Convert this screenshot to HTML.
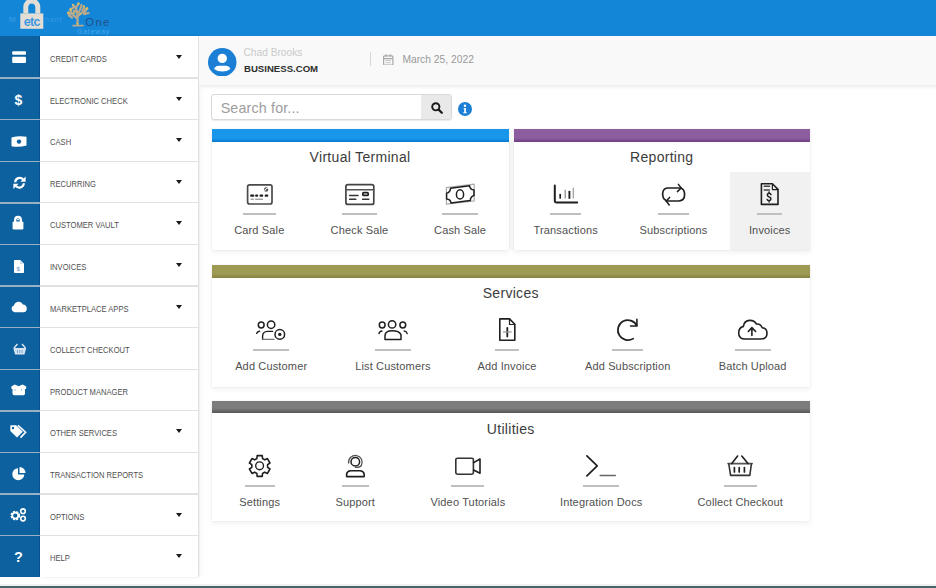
<!DOCTYPE html>
<html><head><meta charset="utf-8">
<style>
*{margin:0;padding:0;box-sizing:border-box}
html,body{width:936px;height:588px;overflow:hidden;background:#fff;font-family:"Liberation Sans",sans-serif;position:relative}
.abs{position:absolute}
.sic{position:absolute;overflow:visible}
.t{position:absolute;white-space:nowrap;line-height:1}
.lbl{position:absolute;left:49.8px;font-size:9.5px;color:#505050;white-space:nowrap;line-height:1;transform:scaleX(0.8);transform-origin:0 0}
.caret{position:absolute;left:175.8px;width:0;height:0;border-left:3.7px solid transparent;border-right:3.7px solid transparent;border-top:4.3px solid #1a1a1a}
.sep{position:absolute;left:0;width:198px;height:1.3px;background:#dfe1e4}
.sepb{position:absolute;left:0;width:40px;height:1.4px;background:#98b0c6}
.card{position:absolute;background:#fff;box-shadow:0 0 2px rgba(0,0,0,.08),0 3px 5px rgba(0,0,0,.05)}
.bar{position:absolute;left:0;top:0;width:100%;height:12.5px}
.title{position:absolute;left:0;width:100%;text-align:center;font-size:14px;letter-spacing:0.3px;color:#3c3c3c;line-height:1}
.ul{position:absolute;height:2px;background:#bfbfbf}
.il{position:absolute;font-size:11px;letter-spacing:0.15px;color:#505050;white-space:nowrap;line-height:1;text-align:center;width:140px}
svg.ic{position:absolute;overflow:visible}
svg.ic .s{fill:none;stroke:#1f1f1f;stroke-linecap:round;stroke-linejoin:round}
svg.ic .f{fill:#1f1f1f;stroke:none}
</style></head><body>

<div class="abs" style="left:0;top:0;width:936px;height:36.4px;background:#1386d7"></div>
<svg class="abs" style="left:0;top:0" width="130" height="37" viewBox="0 0 130 37">
<path d="M25.8 13.6 V7 A6 6 0 0 1 37.8 7 V13.6" stroke="#e2ded6" stroke-width="5" fill="none"/>
<rect x="20.3" y="13.4" width="23" height="15.4" fill="#e2ded6"/>
<text x="31.8" y="26.4" text-anchor="middle" font-family="Liberation Sans" font-weight="700" font-size="12.5" fill="#3f97e0" letter-spacing="-0.6">etc</text>
<text x="9" y="22" font-family="Liberation Sans" font-size="8" fill="#52a8ee" opacity="0.7">M</text>
<text x="45" y="22" font-family="Liberation Sans" font-size="7" fill="#52a8ee" opacity="0.6" letter-spacing="1">hant</text>
<g stroke="#b5a88f" stroke-width="2.3" fill="none" stroke-linecap="round">
<path d="M77.5 25 V15.5 M77.5 18.5 L72 14 M72 14 L68.5 12.5 M72 14 L70.5 9.5 M77.5 16.5 L82.5 12 M82.5 12 L87 8.5 M82.5 12 L84 6.5 M77.5 15.5 L76 8 M76 8 L73 5 M76 8 L78.5 3.5 M80 10 L81.5 5 M70.5 9.5 L73.5 7.5 M69 15.5 L72 17.5 M85 14 L88.5 13 M74 11 L79 12 M70 16 L68 13 M86 10 L84 14"/>
<path d="M73 25.6 H83" stroke-width="1.6"/>
</g>
<g fill="#dcc25a"><circle cx="70.5" cy="9.5" r="1.3"/><circle cx="78.5" cy="3.6" r="1.2"/><circle cx="87" cy="8.5" r="1.2"/><circle cx="68.5" cy="12.5" r="1.1"/><circle cx="73" cy="5" r="1.1"/><circle cx="84" cy="6.5" r="1.1"/><circle cx="74" cy="13" r="1"/><circle cx="80.5" cy="14" r="1"/><circle cx="77.5" cy="23.5" r="0.9"/></g>
<text x="85.3" y="25.9" font-family="Liberation Sans" font-size="11.2" fill="#22508a" letter-spacing="1.4">One</text>
<text x="77" y="34" font-family="Liberation Sans" font-size="6.8" fill="#4aa6ee" letter-spacing="0.9">Gateway</text>
</svg>
<div class="abs" style="left:0;top:36.4px;width:40px;height:540.2px;background:#0e619f"></div>
<div class="abs" style="left:38.7px;top:36.4px;width:1.5px;height:540.2px;background:#0a5190"></div>
<div class="abs" style="left:40.2px;top:36.4px;width:157.8px;height:540.2px;background:#fff;box-shadow:1px 0 1.5px rgba(0,0,0,.13),3px 0 6px rgba(0,0,0,.04)"></div>
<div class="sep" style="top:77.4px"></div><div class="sepb" style="top:77.4px"></div>
<div class="lbl" style="top:54.0px">CREDIT CARDS</div>
<div class="caret" style="top:55.0px"></div>
<div class="sep" style="top:119.0px"></div><div class="sepb" style="top:119.0px"></div>
<div class="lbl" style="top:95.6px">ELECTRONIC CHECK</div>
<div class="caret" style="top:96.6px"></div>
<div class="sep" style="top:160.6px"></div><div class="sepb" style="top:160.6px"></div>
<div class="lbl" style="top:137.2px">CASH</div>
<div class="caret" style="top:138.2px"></div>
<div class="sep" style="top:202.2px"></div><div class="sepb" style="top:202.2px"></div>
<div class="lbl" style="top:178.8px">RECURRING</div>
<div class="caret" style="top:179.8px"></div>
<div class="sep" style="top:243.8px"></div><div class="sepb" style="top:243.8px"></div>
<div class="lbl" style="top:220.4px">CUSTOMER VAULT</div>
<div class="caret" style="top:221.4px"></div>
<div class="sep" style="top:285.4px"></div><div class="sepb" style="top:285.4px"></div>
<div class="lbl" style="top:262.0px">INVOICES</div>
<div class="caret" style="top:263.0px"></div>
<div class="sep" style="top:327.0px"></div><div class="sepb" style="top:327.0px"></div>
<div class="lbl" style="top:303.6px">MARKETPLACE APPS</div>
<div class="caret" style="top:304.6px"></div>
<div class="sep" style="top:368.6px"></div><div class="sepb" style="top:368.6px"></div>
<div class="lbl" style="top:345.2px">COLLECT CHECKOUT</div>
<div class="sep" style="top:410.2px"></div><div class="sepb" style="top:410.2px"></div>
<div class="lbl" style="top:386.8px">PRODUCT MANAGER</div>
<div class="sep" style="top:451.8px"></div><div class="sepb" style="top:451.8px"></div>
<div class="lbl" style="top:428.4px">OTHER SERVICES</div>
<div class="caret" style="top:429.4px"></div>
<div class="sep" style="top:493.4px"></div><div class="sepb" style="top:493.4px"></div>
<div class="lbl" style="top:470.0px">TRANSACTION REPORTS</div>
<div class="sep" style="top:535.0px"></div><div class="sepb" style="top:535.0px"></div>
<div class="lbl" style="top:511.6px">OPTIONS</div>
<div class="caret" style="top:512.6px"></div>
<div class="lbl" style="top:553.2px">HELP</div>
<div class="caret" style="top:554.2px"></div>
<svg class="sic" style="left:11.5px;top:51.3px" width="14" height="12.2" viewBox="0 0 14 12.2"><rect x="0.2" y="0.2" width="13.8" height="3.6" rx="1" fill="#fff"/><rect x="0.2" y="5.7" width="13.8" height="6.3" rx="1" fill="#fff"/></svg>
<svg class="sic" style="left:14px;top:92.5px" width="9" height="14" viewBox="0 0 9 14"><text x="4.5" y="12" text-anchor="middle" font-family="Liberation Sans" font-weight="700" font-size="14" fill="#fff">$</text></svg>
<svg class="sic" style="left:11px;top:135.5px" width="16" height="11" viewBox="0 0 16 11"><path d="M0.5 1.5 Q8 -0.5 15.5 0.8 V9.5 Q8 11.5 0.5 10.2 Z" fill="#fff"/><circle cx="8" cy="5.6" r="2.2" fill="#0e619f"/></svg>
<svg class="sic" style="left:12.5px;top:176px" width="13" height="13.5" viewBox="0 0 13 13.5"><path d="M2.2 6.2 A4.5 4.5 0 0 1 10.2 3.6" stroke="#fff" stroke-width="2.2" fill="none"/><path d="M12.6 0.6 V5.8 H7.4 Z" fill="#fff"/><path d="M10.8 7.3 A4.5 4.5 0 0 1 2.8 9.9" stroke="#fff" stroke-width="2.2" fill="none"/><path d="M0.4 12.9 V7.7 H5.6 Z" fill="#fff"/></svg>
<svg class="sic" style="left:12.3px;top:216px" width="12" height="14" viewBox="0 0 12 14"><path d="M3.2 6 V3.8 A2.8 2.8 0 0 1 8.8 3.8 V6" stroke="#fff" stroke-width="2.3" fill="none"/><rect x="0.6" y="5.4" width="10.8" height="8" rx="1.2" fill="#fff"/><circle cx="6" cy="3.4" r="0.9" fill="#fff"/></svg>
<svg class="sic" style="left:14.2px;top:259.5px" width="10" height="13" viewBox="0 0 10 13"><path d="M0 0.8 Q0 0 0.8 0 H6.2 L10 3.8 V12.2 Q10 13 9.2 13 H0.8 Q0 13 0 12.2 Z" fill="#fff"/><path d="M6 0 V4 H10" fill="#cfdff0"/><text x="4.2" y="11" text-anchor="middle" font-family="Liberation Sans" font-weight="700" font-size="6" fill="#7fa6d0">$</text></svg>
<svg class="sic" style="left:11px;top:300.3px" width="16.5" height="12.5" viewBox="0 0 16.5 12.5"><path d="M3.6 12.2 A3.4 3.4 0 0 1 3 5.6 A4.8 4.8 0 0 1 12 4.4 A4 4 0 0 1 13 12.2 Z" fill="#fff"/></svg>
<svg class="sic" style="left:12.5px;top:342.8px" width="13.5" height="12" viewBox="0 0 13.5 12"><path d="M1 5 L4.5 1 M12.5 5 L9 1" stroke="#dde8f3" stroke-width="1.4"/><path d="M0.3 5 H13.2 L11.5 11.5 H2 Z" fill="#d5e2f0"/><path d="M4.5 7 V10 M6.75 7 V10 M9 7 V10" stroke="#7fa6d0" stroke-width="1"/></svg>
<svg class="sic" style="left:11.2px;top:384px" width="15.5" height="11.5" viewBox="0 0 15.5 11.5"><path d="M0.3 2.6 L3.8 0.4 L7.75 2.2 L11.7 0.4 L15.2 2.6 V4.6 L14 5.2 V9.6 Q14 11.2 12.4 11.2 H3.1 Q1.5 11.2 1.5 9.6 V5.2 L0.3 4.6 Z" fill="#fff"/><path d="M4 5 V6.8 M10.5 5 V6.8" stroke="#9fbfdf" stroke-width="1"/></svg>
<svg class="sic" style="left:10.2px;top:424.8px" width="16.5" height="13" viewBox="0 0 16.5 13"><path d="M0.3 1 Q0.3 0.3 1 0.3 H6.2 L12.8 6.8 L7 12.6 L0.3 6 Z" fill="#fff"/><circle cx="3" cy="3" r="1.2" fill="#0e619f"/><path d="M8 0.3 L15.6 7.2 L10.5 12.6" stroke="#fff" stroke-width="1.6" fill="none"/></svg>
<svg class="sic" style="left:12px;top:467px" width="13.5" height="13.5" viewBox="0 0 13.5 13.5"><path d="M6 1.2 A6 6 0 1 0 12.3 7.4 H6 Z" fill="#fff"/><path d="M7.5 0 A6 6 0 0 1 13.5 6 H7.5 Z" fill="#fff"/></svg>
<svg class="sic" style="left:10px;top:507.8px" width="16.5" height="13.5" viewBox="0 0 16.5 13.5"><circle cx="5.3" cy="7.6" r="3.6" stroke="#fff" stroke-width="2.4" fill="none" stroke-dasharray="1.9 1"/><circle cx="5.3" cy="7.6" r="3" stroke="#fff" stroke-width="1.6" fill="none"/><circle cx="13" cy="3.2" r="2.3" stroke="#fff" stroke-width="1.6" fill="none"/><circle cx="13" cy="10.6" r="2.3" stroke="#fff" stroke-width="1.6" fill="none"/></svg>
<svg class="sic" style="left:13px;top:549px" width="11" height="14" viewBox="0 0 11 14"><text x="5.5" y="12.5" text-anchor="middle" font-family="Liberation Sans" font-weight="700" font-size="14.5" fill="#fff">?</text></svg>
<div class="abs" style="left:0;top:584px;width:936px;height:2px;background:#f0f0f0"></div><div class="abs" style="left:0;top:586px;width:936px;height:2px;background:#47646c"></div>
<div class="abs" style="left:199px;top:36.4px;width:737px;height:48.6px;background:#f9f9f9"></div>
<div class="abs" style="left:199px;top:85px;width:737px;height:4px;background:linear-gradient(#ececec,#fdfdfd)"></div>
<svg class="abs" style="left:208px;top:47.8px" width="28.5" height="28.5" viewBox="0 0 28 28">
<circle cx="14" cy="14" r="14" fill="#1a7fd5"/>
<circle cx="14" cy="10.2" r="4.6" fill="#fff"/>
<path d="M6 20.6 Q6.8 17.6 10.6 17.4 H17.4 Q21.2 17.6 22 20.6 Q18.8 23.2 14 23.2 Q9.2 23.2 6 20.6 Z" fill="#fff"/>
</svg>
<div class="t" style="left:243.5px;top:48.2px;font-size:10.2px;color:#c9c9c9">Chad Brooks</div>
<div class="t" style="left:244px;top:64.1px;font-size:9.6px;font-weight:700;color:#2e2e2e">BUSINESS.COM</div>
<div class="abs" style="left:369.5px;top:52px;width:1px;height:14px;background:#d6d6d6"></div>
<svg class="abs" style="left:383px;top:53.5px" width="10.5" height="11.5" viewBox="0 0 10.5 11.5">
<rect x="0.6" y="1.8" width="9.3" height="9.2" rx="1" fill="none" stroke="#a9a9a9" stroke-width="1.2"/>
<path d="M0.6 4.6 H9.9 M3 0.3 V2.8 M7.5 0.3 V2.8" stroke="#a9a9a9" stroke-width="1.2"/>
<path d="M2.5 6.5 H8 M2.5 8.7 H8" stroke="#c6c6c6" stroke-width="1"/>
</svg>
<div class="t" style="left:402.4px;top:55.4px;font-size:10.3px;color:#9a9a9a">March 25, 2022</div>
<div class="abs" style="left:211px;top:94.4px;width:241px;height:25.8px;border:1px solid #d9d9d9;border-radius:3px;background:#fff;box-shadow:0 1px 1px rgba(0,0,0,.08)"></div>
<div class="abs" style="left:421px;top:95.4px;width:30px;height:23.8px;background:#e9e9ea;border-radius:0 2px 2px 0"></div>
<div class="t" style="left:220.7px;top:100.6px;font-size:14.3px;letter-spacing:0.15px;color:#9d9d9d">Search for...</div>
<svg class="abs" style="left:431px;top:102px" width="12" height="12" viewBox="0 0 12 12">
<circle cx="4.8" cy="4.8" r="3.6" fill="none" stroke="#1a1a1a" stroke-width="1.9"/>
<path d="M7.6 7.6 L10.8 10.8" stroke="#1a1a1a" stroke-width="2.2" stroke-linecap="round"/>
</svg>
<svg class="abs" style="left:458px;top:101.7px" width="14" height="14" viewBox="0 0 14 14">
<circle cx="7" cy="7" r="7" fill="#1a7fd5"/>
<circle cx="7" cy="3.8" r="1.2" fill="#fff"/>
<path d="M5.6 5.9 H7.9 V10.3 H8.8 V11.2 H5.3 V10.3 H6.2 V6.8 H5.6 Z" fill="#fff"/>
</svg>
<div class="abs" style="left:508px;top:141px;width:6px;height:109px;background:#f9f9f9"></div>
<div class="card" style="left:211.5px;top:129px;width:297.0px;height:121px"><div class="bar" style="background:linear-gradient(#1896e9 0,#1896e9 72%,#0b78d0 100%)"></div><div class="title" style="top:21.3px">Virtual Terminal</div></div>
<div class="card" style="left:513.5px;top:129px;width:296.5px;height:121px"><div class="bar" style="background:linear-gradient(#8c5d9f 0,#8c5d9f 70%,#6e3d84 100%)"></div><div class="title" style="top:21.3px">Reporting</div></div>
<div class="abs" style="left:729.6px;top:172px;width:80.4px;height:78px;background:#f1f1f1"></div>
<div class="card" style="left:211.5px;top:265px;width:598.5px;height:121.5px"><div class="bar" style="background:linear-gradient(#9e9953 0,#9e9953 70%,#868140 100%)"></div><div class="title" style="top:21.3px">Services</div></div>
<div class="card" style="left:211.5px;top:400.5px;width:598.5px;height:120.5px"><div class="bar" style="background:linear-gradient(#7d7d7d 0,#7d7d7d 60%,#575757 100%)"></div><div class="title" style="top:21.3px">Utilities</div></div>
<div class="ul" style="left:243.0px;top:213.0px;width:32.6px"></div>
<div class="il" style="left:189.3px;top:225.3px">Card Sale</div>
<div class="ul" style="left:341.6px;top:213.0px;width:35.7px"></div>
<div class="il" style="left:289.5px;top:225.3px">Check Sale</div>
<div class="ul" style="left:442.3px;top:213.0px;width:35.6px"></div>
<div class="il" style="left:390.1px;top:225.3px">Cash Sale</div>
<div class="ul" style="left:550.4px;top:213.0px;width:30.7px"></div>
<div class="il" style="left:495.7px;top:225.3px">Transactions</div>
<div class="ul" style="left:658.0px;top:213.0px;width:31px"></div>
<div class="il" style="left:603.5px;top:225.3px">Subscriptions</div>
<div class="ul" style="left:757.4px;top:213.0px;width:24.6px"></div>
<div class="il" style="left:699.7px;top:225.3px">Invoices</div>
<div class="ul" style="left:253.0px;top:349.0px;width:36.4px"></div>
<div class="il" style="left:201.2px;top:361.3px">Add Customer</div>
<div class="ul" style="left:374.8px;top:349.0px;width:36.3px"></div>
<div class="il" style="left:322.9px;top:361.3px">List Customers</div>
<div class="ul" style="left:494.6px;top:349.0px;width:24.9px"></div>
<div class="il" style="left:437.0px;top:361.3px">Add Invoice</div>
<div class="ul" style="left:612.4px;top:349.0px;width:30.7px"></div>
<div class="il" style="left:557.7px;top:361.3px">Add Subscription</div>
<div class="ul" style="left:734.8px;top:349.0px;width:35.9px"></div>
<div class="il" style="left:682.7px;top:361.3px">Batch Upload</div>
<div class="ul" style="left:244.6px;top:484.5px;width:30.2px"></div>
<div class="il" style="left:189.7px;top:496.8px">Settings</div>
<div class="ul" style="left:341.6px;top:484.5px;width:27.5px"></div>
<div class="il" style="left:285.3px;top:496.8px">Support</div>
<div class="ul" style="left:451.4px;top:484.5px;width:32.9px"></div>
<div class="il" style="left:397.9px;top:496.8px">Video Tutorials</div>
<div class="ul" style="left:583.0px;top:484.5px;width:36.4px"></div>
<div class="il" style="left:531.2px;top:496.8px">Integration Docs</div>
<div class="ul" style="left:723.8px;top:484.5px;width:32.9px"></div>
<div class="il" style="left:670.3px;top:496.8px">Collect Checkout</div>
<svg class="ic" style="left:0;top:0" width="936" height="588" viewBox="0 0 936 588"><rect class="s" x="247.6" y="184.8" width="24.4" height="19.2" rx="2" stroke-width="1.7" style="stroke:#4a4a4a"/><circle class="f" cx="266.1" cy="189.5" r="2.2" style="fill:#555"/><path class="s" d="M264.6 190.8 Q264.8 188.4 267.4 188.2" stroke-width="1" style="stroke:#fff"/><path class="s" d="M251.2 195.7 H253.2 M256.2 195.7 H257.1 M260.6 195.7 H262.1 M265.8 195.7 H267.2" stroke-width="2.3"/><path class="s" d="M251 199.2 H253.5 M255.5 199.2 H262.5" stroke-width="1" style="stroke:#777"/><rect class="s" x="345.9" y="184.6" width="27.9" height="19.8" rx="2" stroke-width="1.7" style="stroke:#444"/><path class="s" d="M346 189.8 H373.8" stroke-width="1.4" style="stroke:#555"/><path class="s" d="M349.6 195.5 H358 M349.6 199.3 H355.8 M362.6 199.3 H368.8" stroke-width="1.5" style="stroke:#333"/><rect class="s" x="362.8" y="192.6" width="5.4" height="2.8" rx="1" stroke-width="1.7"/><path class="s" d="M446.4 187.6 L474.2 184.2 V200.8 L446.4 204.2 Z" stroke-width="1.2" style="stroke:#aaa"/><path class="s" d="M450.5 188.2 L469.6 185.8 Q470.2 189.6 474 190 V195.6 Q470.6 196.4 470.2 200.6 L451 203 Q450.6 199.2 446.6 199 V193.2 Q450.4 192.4 450.5 188.2 Z" stroke-width="1.5"/><ellipse class="s" cx="460" cy="194.4" rx="3.6" ry="4.6" stroke-width="1.5"/><path class="s" d="M554.8 185.6 V201 Q554.8 202.4 556.2 202.4 H577.2" stroke-width="2"/><path class="s" d="M560.2 194.6 V198" stroke-width="1.7"/><path class="s" d="M565.2 190 V198" stroke-width="1.2" style="stroke:#888"/><path class="s" d="M569.4 191.6 V198" stroke-width="1.9"/><path class="s" d="M573.3 188 V198" stroke-width="1.2" style="stroke:#999"/><path class="s" d="M681 188 H667.4 Q662.8 188.4 662.6 194 Q662.8 198.6 665.4 200" stroke-width="1.7"/><path class="s" d="M678.4 184.4 L681.2 188 L677.4 191.6" stroke-width="1.5"/><path class="s" d="M666.2 201 H679 Q684.6 200.6 684.6 194.6 Q684.4 189.8 681.8 188.6" stroke-width="1.7"/><path class="s" d="M669.6 197.4 L666.2 201 L669.2 205" stroke-width="1.5"/><path class="s" d="M761.4 183.8 H772.4 L778 189.4 V204.4 H761.4 Z" stroke-width="1.6"/><path class="s" d="M772.4 183.8 V189.6 H778" stroke-width="1.2"/><path class="s" d="M764.2 186.2 H769.6 M764.2 190 H769.4" stroke-width="1.4" style="stroke:#444"/><path class="s" d="M771 194.6 Q770.4 193.2 769 193.3 Q767.2 193.6 767.4 195.2 Q767.6 196.6 769.2 197 Q771 197.4 770.9 199 Q770.8 200.6 769 200.6 Q767.6 200.5 767.2 199.4 M769.1 192 V193.2 M769.1 200.6 V202" stroke-width="1.5"/><circle class="s" cx="261.2" cy="325" r="2.9" stroke-width="1.5"/><circle class="s" cx="271.1" cy="324.7" r="3.7" stroke-width="1.5"/><path class="s" d="M256.6 333.4 Q257.4 331.4 259.6 331.2" stroke-width="1.4"/><path class="s" d="M262.6 339.4 V336 Q262.8 331.6 267.4 331.4 H272.6" stroke-width="1.4"/><path class="s" d="M262.6 339.4 H274" stroke-width="1.2" style="stroke:#777"/><circle class="s" cx="279.8" cy="334.4" r="4.8" stroke-width="1.5"/><circle class="f" cx="279.8" cy="334.4" r="1.7"/><circle class="s" cx="382.2" cy="325" r="2.9" stroke-width="1.5"/><circle class="s" cx="392.1" cy="324.4" r="3.7" stroke-width="1.5"/><circle class="s" cx="402.8" cy="325" r="2.9" stroke-width="1.5"/><path class="s" d="M379 333.6 Q379.6 331.2 382 331" stroke-width="1.4"/><path class="s" d="M407.2 333.6 Q406.6 331.2 404.2 331" stroke-width="1.4"/><path class="s" d="M385 339.4 V335.6 Q385.2 330.8 392.1 330.8 Q399 330.8 401 334.6 V339.4 Z" stroke-width="1.5"/><path class="s" d="M499.8 318.9 H509.5 L514.8 324.3 V340.2 H499.8 Z" stroke-width="1.6"/><path class="s" d="M509.5 318.9 V324.5 H514.8" stroke-width="1.2"/><path class="s" d="M507.3 327.8 V336.4" stroke-width="1.8"/><path class="s" d="M503.4 331.9 H511.2" stroke-width="1.1" style="stroke:#999"/><path class="s" d="M633.2 338.6 A10 10 0 1 1 636.8 325.6" stroke-width="1.7"/><path class="s" d="M630.6 326 H636.9 V319.4" stroke-width="1.6"/><path class="s" d="M745.1 339 H760.6 Q767 339 767 333.2 Q767 328.2 762.2 327.8 Q760.6 323.6 756.4 324 Q754.2 320.2 749.6 320.4 Q744.2 320.6 743.4 326.4 Q738.6 327.6 738.7 333.2 Q738.8 339 745.1 339 Z" stroke-width="1.6"/><path class="s" d="M751.9 335.4 V327.8 M748.3 331.5 L751.9 327.6 L755.6 331.5" stroke-width="1.6"/><path class="s" d="M256.88 458.51 L257.16 455.61 L262.24 455.61 L262.52 458.51 L264.77 459.82 L267.43 458.60 L269.97 463.01 L267.59 464.70 L267.59 467.30 L269.97 468.99 L267.43 473.40 L264.77 472.18 L262.52 473.49 L262.24 476.39 L257.16 476.39 L256.88 473.49 L254.63 472.18 L251.97 473.40 L249.43 468.99 L251.81 467.30 L251.81 464.70 L249.43 463.01 L251.97 458.60 L254.63 459.82 Z" stroke-width="1.6"/><circle class="s" cx="259.6" cy="465.8" r="3.9" stroke-width="1.4"/><circle class="s" cx="355.3" cy="461.8" r="4.3" stroke-width="1.5"/><path class="s" d="M348.6 463 A6.8 6.8 0 1 1 361.4 465.4 Q360.2 467.6 355.4 467.4" stroke-width="1.3" style="stroke:#555"/><path class="s" d="M346.6 476.6 V474.2 Q347.2 471 350.6 470.8 H360 Q363.6 471 364.2 474.2 V476.6 Z" stroke-width="1.6"/><rect class="s" x="455.8" y="458.2" width="17.6" height="16" rx="1.6" stroke-width="1.6" style="stroke:#333"/><path class="s" d="M473.6 462.6 L480 459 V473.2 L473.6 470" stroke-width="1.6"/><path class="s" d="M586.9 455.8 L597.2 465.8 L586.9 475.8" stroke-width="1.7"/><path class="s" d="M600.2 475.5 H615.4" stroke-width="1.5" style="stroke:#666"/><path class="s" d="M728 463.6 H752.2" stroke-width="1.6" style="stroke:#555"/><path class="s" d="M731.8 463.6 L737.6 456 M748 463.6 L741.8 456" stroke-width="1.6"/><path class="s" d="M728.8 464 L730.6 475.4 H749.8 L751.4 464" stroke-width="1.6" style="stroke:#333"/><path class="s" d="M734.4 467.6 V472 M739.2 467.6 V472 M744.4 467.6 V472" stroke-width="1.7"/></svg>
</body></html>
